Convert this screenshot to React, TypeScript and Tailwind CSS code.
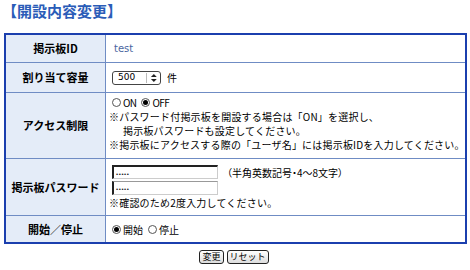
import React from "react";

const Radio = ({ checked }: { checked: boolean }) => (
  <span className="inline-flex items-center justify-center w-[9px] h-[9px] rounded-full border border-[#555] bg-white shrink-0">
    {checked && <span className="w-[5px] h-[5px] rounded-full bg-black" />}
  </span>
);

const Label = ({ children }: { children: React.ReactNode }) => (
  <div className="w-[100px] shrink-0 bg-[#e4ecf8] border-r border-[#6f8cc4] flex items-center justify-center text-[11px] font-bold text-black">
    {children}
  </div>
);

export default function App() {
  return (
    <div className="w-[470px] h-[270px] bg-white font-['Noto_Sans_CJK_JP',sans-serif] text-black">
      <div className="h-[33px] pl-[2px] pt-[1px] text-[15px] leading-[20px] font-bold text-[#2a5cb8]">
        【開設内容変更】
      </div>
      <div className="ml-[4px] w-[463px] border-2 border-[#1b3fae] flex flex-col">
        <div className="flex h-[28px] border-b border-[#6f8cc4]">
          <Label>掲示板ID</Label>
          <div className="flex items-center pl-[8px] text-[10px] text-[#4a66a0] font-['DejaVu_Sans',sans-serif]">test</div>
        </div>
        <div className="flex h-[30px] border-b border-[#6f8cc4]">
          <Label>割り当て容量</Label>
          <div className="flex items-center pl-[6px] text-[10px] gap-[6px]">
            <div className="flex items-center w-[49px] h-[14px] border border-[#444] rounded-[3px] bg-white">
              <span className="pl-[5px] w-[34px] text-[9px] font-['DejaVu_Sans',sans-serif] leading-none">500</span>
              <span className="h-[10px] border-l border-[#bbb]" />
              <svg width="12" height="10" viewBox="0 0 12 10" className="ml-[1px]">
                <path d="M3 4 L6 1 L9 4 Z" fill="#222" />
                <path d="M3 6 L6 9 L9 6 Z" fill="#222" />
              </svg>
            </div>
            <span>件</span>
          </div>
        </div>
        <div className="flex h-[66px] border-b border-[#6f8cc4]">
          <Label>アクセス制限</Label>
          <div className="flex flex-col justify-center pl-[3px] pb-[4px] text-[10px] leading-[14px] tracking-[0.2px]">
            <div className="flex items-center pl-[3px] gap-[2px] text-[10px] tracking-[-0.6px]">
              <Radio checked={false} />
              <span className="mr-[3px]">ON</span>
              <Radio checked={true} />
              <span>OFF</span>
            </div>
            <div>※パスワード付掲示板を開設する場合は「ON」を選択し、</div>
            <div className="pl-[14px]">掲示板パスワードも設定してください。</div>
            <div className="whitespace-nowrap">※掲示板にアクセスする際の「ユーザ名」には掲示板IDを入力してください。</div>
          </div>
        </div>
        <div className="flex h-[57px] border-b border-[#6f8cc4]">
          <Label>掲示板パスワード</Label>
          <div className="flex flex-col justify-center pl-[3px] text-[10px]">
            <div className="flex items-center">
              <div className="ml-[3px] w-[106px] h-[14px] flex items-center border-t-2 border-l-2 border-b border-r border-t-[#222] border-l-[#222] border-b-[#ccc] border-r-[#ccc] bg-white text-[6px] leading-none pl-[2px] pt-[2px] tracking-[0.6px] text-[#222] font-['Liberation_Sans',sans-serif]">•••••</div>
              <span className="ml-[9px] [font-feature-settings:'palt']">（半角英数記号・4〜8文字）</span>
            </div>
            <div className="ml-[3px] mt-[1px] w-[106px] h-[14px] flex items-center border-t border-l-2 border-b border-r border-t-[#999] border-l-[#222] border-b-[#ccc] border-r-[#ccc] bg-white text-[6px] leading-none pl-[2px] pt-[2px] tracking-[0.6px] text-[#222] font-['Liberation_Sans',sans-serif]">•••••</div>
            <div className="leading-[14px] mt-[1px] tracking-[0.2px]">※確認のため2度入力してください。</div>
          </div>
        </div>
        <div className="flex h-[26px]">
          <Label>開始／停止</Label>
          <div className="flex items-center pl-[6px] gap-[2px] text-[10px]">
            <Radio checked={true} />
            <span className="mr-[3px]">開始</span>
            <Radio checked={false} />
            <span>停止</span>
          </div>
        </div>
      </div>
      <div className="flex justify-center gap-[3px] mt-[6px] pr-[2px]">
        <button className="h-[14px] px-[2px] border border-[#222] rounded-[3px] bg-gradient-to-b from-white to-[#ddd] text-[9px] leading-[12px] font-['Noto_Sans_CJK_JP',sans-serif]">変更</button>
        <button className="h-[14px] px-[2px] border border-[#222] rounded-[3px] bg-gradient-to-b from-white to-[#ddd] text-[9px] leading-[12px] font-['Noto_Sans_CJK_JP',sans-serif]">リセット</button>
      </div>
    </div>
  );
}
